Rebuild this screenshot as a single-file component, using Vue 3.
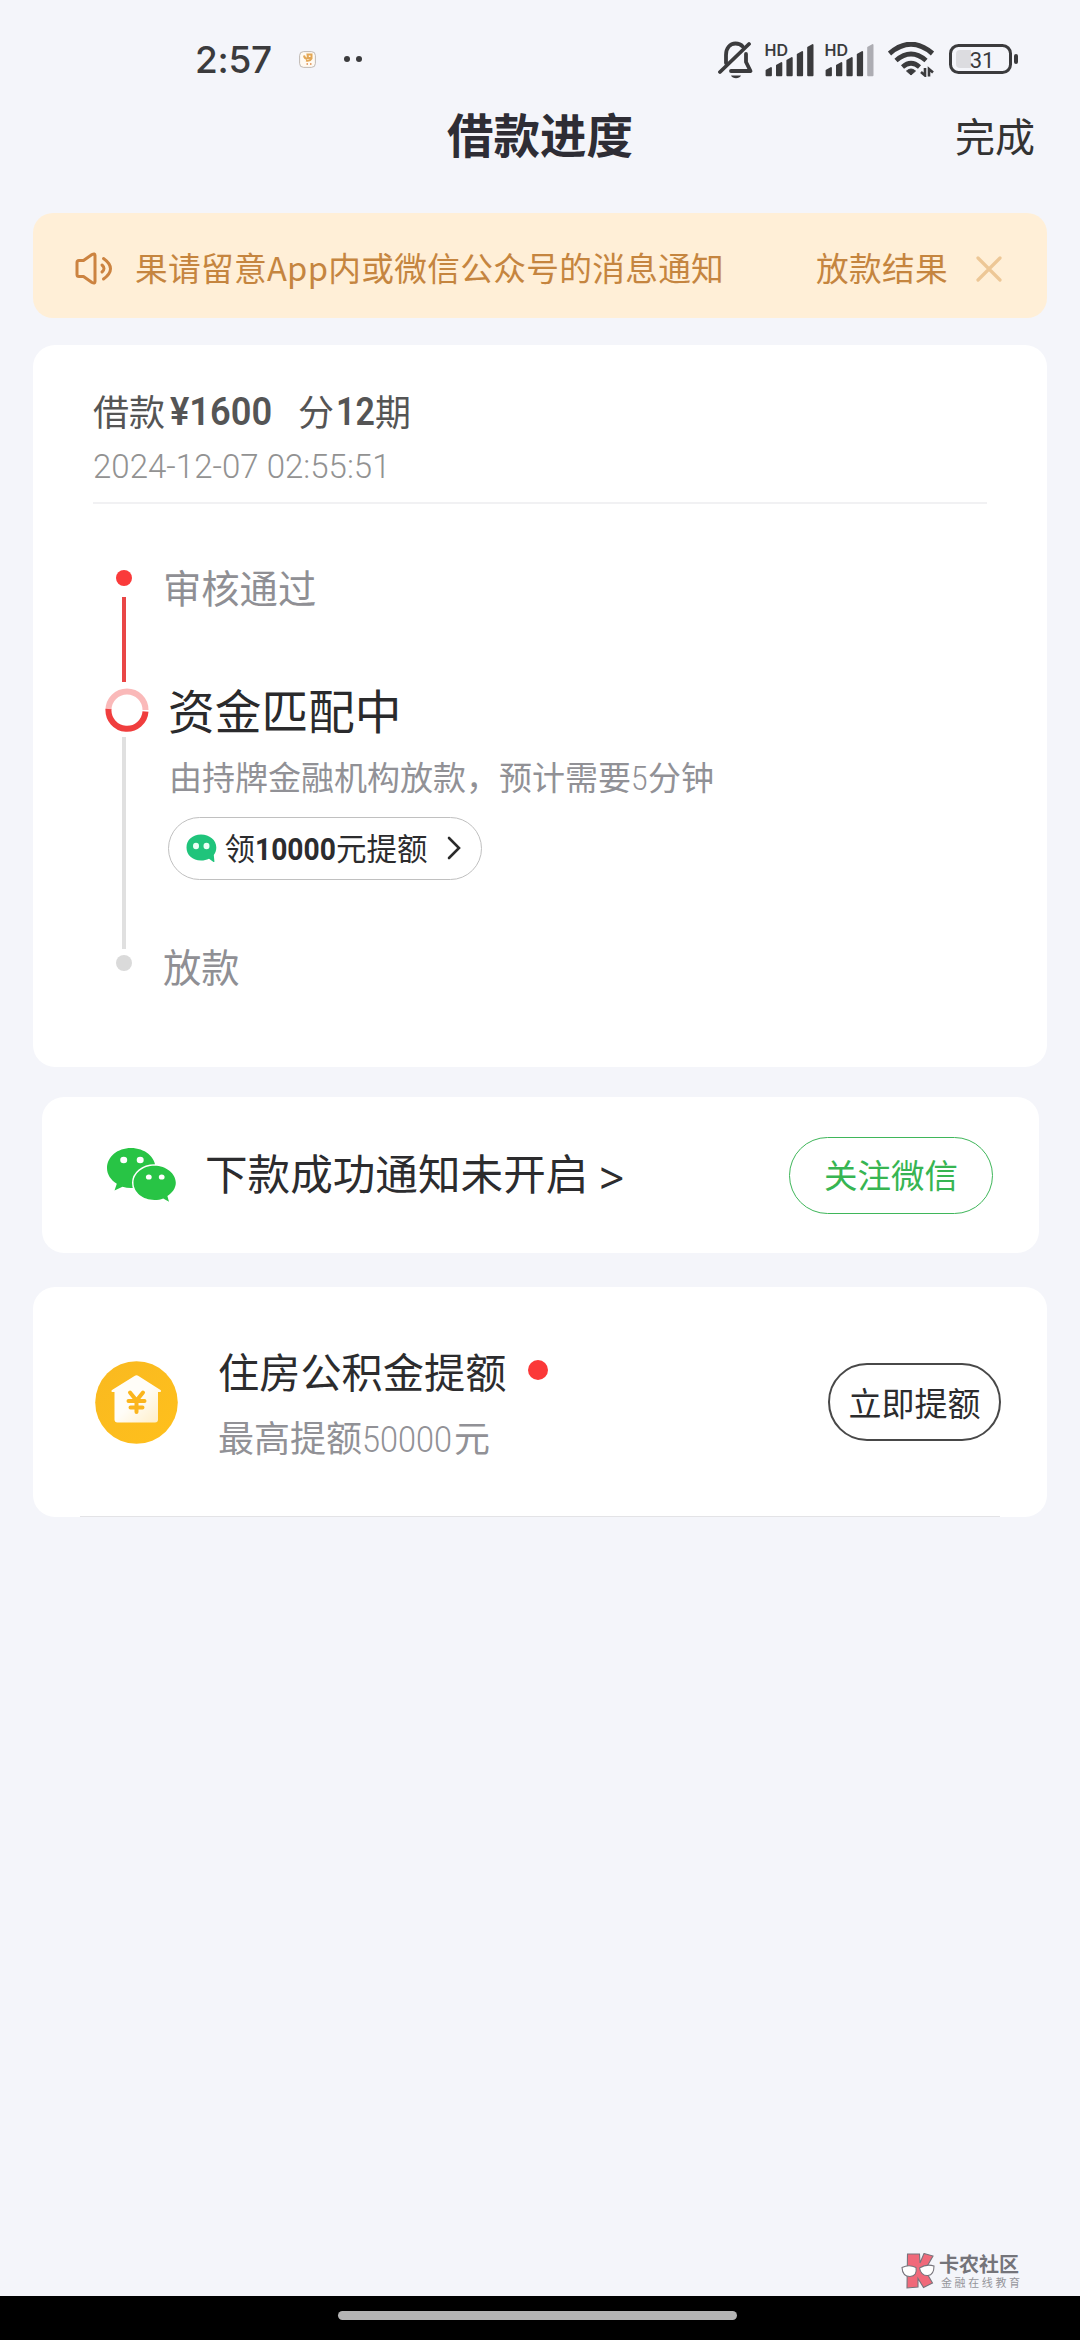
<script setup>
const bars = [
  { x: 0, h: 8 },
  { x: 10.4, h: 13 },
  { x: 20.8, h: 18 },
  { x: 31.2, h: 24 },
  { x: 41.6, h: 31 },
]
const signals = [{ level: 5 }, { level: 4 }]
</script>

<template>
  <div class="screen">
    <header class="status">
      <span class="clock">2:57</span>
      <svg class="app-dot" width="17" height="17" viewBox="0 0 17 17">
        <rect x=".6" y=".6" width="15.8" height="15.8" rx="4" fill="#fffaf2" stroke="#b9b1ac" stroke-width=".9" />
        <path d="M5 4.500q.5 3 3.200 3.200M8.500 3.500h4v3.500h-3.500zM7 9.500q4 1 5.500-2" fill="none" stroke="#e3a756" stroke-width="2" />
        <path d="M7.500 13h1.500M11 13h1.500" stroke="#dd8a4a" stroke-width="1.600" />
      </svg>
      <span class="more"><i></i><i></i></span>
      <span class="grow"></span>
      <svg class="bell" width="36" height="38" viewBox="0 0 36 38" fill="none" stroke="#3b3b3d" stroke-width="3.800" stroke-linecap="round" stroke-linejoin="round">
        <path d="M8 22V14C8 7 12 2.500 17.500 2.500c3 0 5.500 1 7.200 3" />
        <path d="M28 13v8l4.500 9H13" />
        <path d="M2 31 31 3" />
        <path d="M13 34.500h10c-1.500 3.500-8.500 3.500-10 0z" fill="#3b3b3d" stroke="none" />
      </svg>
      <svg v-for="(s, n) in signals" :key="n" class="signal" width="51" height="34" viewBox="0 0 51 34">
        <text x="-0.500" y="13.500" class="hd">HD</text>
        <path
          v-for="(b, i) in bars"
          :key="i"
          :d="`M${b.x + 1.5} ${34 - b.h + 2.500}l4.500 -2.500V33.300h-4.500z`"
          :fill="i < s.level ? '#3b3b3d' : '#adadb3'"
          :stroke="i < s.level ? '#3b3b3d' : '#adadb3'"
          stroke-width="1.800"
          stroke-linejoin="round"
        />
      </svg>
      <svg class="wifi" width="47" height="35" viewBox="0 0 47 35" fill="none" stroke="#3b3b3d">
        <path d="M1.500 11.500Q23 -7 44.500 11.500" stroke-width="5" />
        <path d="M8 18.500Q23 5.500 38 18.500" stroke-width="4.800" />
        <path d="M14.500 25Q23 17.500 31.500 25" stroke-width="4.600" />
        <path d="M18.500 29q4.500-4 9 0l-4.500 4z" fill="#3b3b3d" stroke-width="1" />
        <path d="M37 26v7.500l-4-3.500M41 34.500V27l4 3.500" stroke-width="2.600" />
      </svg>
      <svg class="battery" width="70" height="30" viewBox="0 0 70 30">
        <rect x="1.500" y="1.500" width="60" height="27" rx="8" fill="none" stroke="#3b3b3d" stroke-width="3" />
        <path d="M11 6h11v18H11a4 4 0 0 1-4-4V10a4 4 0 0 1 4-4z" fill="#dcdce0" />
        <rect x="65" y="10" width="4" height="10" rx="2" fill="#3b3b3d" />
        <text x="33" y="23.500" text-anchor="middle" class="pct">31</text>
      </svg>
    </header>

    <nav class="nav">
      <span></span>
      <h1>借款进度</h1>
      <a class="done">完成</a>
    </nav>

    <section class="notice">
      <svg class="speaker" width="38" height="33" viewBox="0 0 38 33" fill="none" stroke="#cc8340" stroke-width="3" stroke-linejoin="round" stroke-linecap="round">
        <path d="M2 10.500q0-2 2-2h4.500L17 2.500q3-1.500 3 1v26q0 2.500-3 1l-8.500-6H4q-2 0-2-2z" />
        <path d="M27 13q4 3.500 0 7M28.500 6.500q14 10 0 20.500" />
      </svg>
      <div class="marquee">
        <span>果请留意App内或微信公众号的消息通知</span>
        <span>放款结果请</span>
      </div>
      <svg class="close" width="26" height="26" viewBox="0 0 26 26" stroke="#edc796" stroke-width="3.200" stroke-linecap="round">
        <path d="M2 2l22 22M24 2 2 24" />
      </svg>
    </section>

    <section class="card loan">
      <div class="loan-head">
        <p class="loan-title">
          <span>借款</span><b class="din amount">¥1600</b><span>分</span><b class="din term">12</b><span>期</span>
        </p>
        <p class="loan-date"><span class="din">2024-12-07 02:55:51</span></p>
      </div>
      <div class="timeline">
        <div class="rail">
          <i class="dot red"></i>
          <i class="line past"></i>
          <svg class="ring" width="44" height="44" viewBox="0 0 44 44" fill="none" stroke-width="6">
            <path d="M3.500 22a18.500 18.500 0 0 1 37 0" stroke="#fab9b9" />
            <path d="M3.500 21a18.500 18.500 0 0 0 37 2.500" stroke="#f03e3e" />
          </svg>
          <i class="line next"></i>
          <i class="dot gray"></i>
        </div>
        <div class="steps">
          <p class="step">审核通过</p>
          <p class="current">资金匹配中</p>
          <p class="desc">由持牌金融机构放款，预计需要<span class="din five">5</span>分钟</p>
          <a class="bonus">
            <svg width="31" height="29" viewBox="0 0 31 29">
              <path d="M15 .5C6.500 .5 .5 6 .5 13.500S6.500 26.500 15 26.500c3 0 5.500-.6 8-1.800l4.500 3.300q1 .3.900-.8l-.6-6.200c1.700-2.200 2.500-4.700 2.500-7.500C30.300 6 23.500.5 15 .5z" fill="#1fc47b" />
              <ellipse cx="10" cy="12" rx="3" ry="3.200" fill="#e9fff4" />
              <ellipse cx="20.500" cy="12" rx="3" ry="3.200" fill="#e9fff4" />
            </svg>
            <span class="bonus-text">领<b class="din ten">10000</b>元提额</span>
            <svg class="chev" width="14" height="24" viewBox="0 0 14 24" fill="none" stroke="#2b2b2b" stroke-width="2.600" stroke-linecap="round">
              <path d="M2 2l10 10L2 22" />
            </svg>
          </a>
          <p class="step last">放款</p>
        </div>
      </div>
    </section>

    <section class="card wechat">
      <svg width="69" height="54" viewBox="0 0 69 54">
        <path d="M24 0C10.500 0 0 8.800 0 20c0 6.500 3.800 12 9.800 15.800L7.500 42.500l8-3.700c2.800.8 5.500 1.200 8.500 1.200 13.500 0 24.500-8.800 24.500-20S37.500 0 24 0z" fill="#28c445" />
        <path d="M47.500 17.700C35.800 17.700 26.500 25.300 26.500 34.800s9.300 17.200 21 17.200c3.200 0 6-.5 8.700-1.500l5.800 3.300-1.600-5.800c5-3.200 8.400-7.900 8.400-13.200 0-9.500-9.800-17.100-21.300-17.100z" fill="#28c445" stroke="#fff" stroke-width="3" paint-order="stroke" />
        <ellipse cx="16.700" cy="12" rx="3.500" ry="3.200" fill="#fff" />
        <ellipse cx="33.200" cy="12" rx="3.500" ry="3.200" fill="#fff" />
        <ellipse cx="41.800" cy="29" rx="2.900" ry="2.600" fill="#fff" />
        <ellipse cx="54.700" cy="29" rx="2.900" ry="2.600" fill="#fff" />
      </svg>
      <span class="wechat-text">下款成功通知未开启</span>
      <span class="gt">&gt;</span>
      <a class="btn green">关注微信</a>
    </section>

    <section class="card fund">
      <svg width="83" height="83" viewBox="0 0 83 83">
        <defs>
          <linearGradient id="disc" x1="0" y1="0" x2="1" y2="1">
            <stop offset="0" stop-color="#f9b920" />
            <stop offset="1" stop-color="#ffc01c" />
          </linearGradient>
          <linearGradient id="house" x1="0" y1="0" x2="1" y2="1">
            <stop offset=".5" stop-color="#fffdf8" />
            <stop offset="1" stop-color="#ffedc4" />
          </linearGradient>
        </defs>
        <circle cx="41.500" cy="41.500" r="41.300" fill="url(#disc)" />
        <path d="M39.500 15q2-1.500 4 0L65.500 29q1.500 1.500-.5 2h-2v27.500q0 3-3 3H22.500q-3 0-3-3V31h-2q-2-.5-.5-2z" fill="url(#house)" />
        <path d="M35 31.500l6.500 8 6.500-8M41.500 40v11M33.500 40h16M35.500 46.500h12" fill="none" stroke="#fbb51d" stroke-width="4" stroke-linecap="round" />
      </svg>
      <div class="fund-main">
        <p class="fund-title">住房公积金提额<i></i></p>
        <p class="fund-sub">最高提额<span class="din fifty">50000</span>元</p>
      </div>
      <a class="btn dark">立即提额</a>
    </section>

    <div class="grow"></div>

    <footer class="mark">
      <svg width="34" height="36" viewBox="0 0 34 36" stroke="#77747c" stroke-width="1.100">
        <path d="M6.500 1h12l.5 9 4-9.500 9 2.500-8 14 7.500 13-9 4.500-5.500-9v8.500l-11 1z" fill="#f0697a" />
        <path d="M1 14.500q7-3.500 14 0 1.500 8.500-6 9-7.500 0-8-9zM18.500 15q7-4.500 14.500-2 0 9-6 9.500-7 .5-8.500-7.500z" fill="#fff" />
      </svg>
      <div>
        <p class="mark-name">卡农社区</p>
        <p class="mark-sub">金融在线教育</p>
      </div>
    </footer>
    <div class="gesture"><i></i></div>
  </div>
</template>

<style>
body {
  margin: 0;
}
</style>

<style scoped>
.screen {
  width: 1080px;
  height: 2340px;
  box-sizing: border-box;
  display: flex;
  flex-direction: column;
  overflow: hidden;
  background: #f4f5fa;
  color: #2c2c2e;
  font-family: "Noto Sans CJK SC", sans-serif;
}
p,
h1 {
  margin: 0;
  white-space: nowrap;
}
i,
.din {
  display: inline-block;
}
.din {
  font-family: Roboto, sans-serif;
  line-height: 1;
  transform-origin: left center;
}
.grow {
  flex: 1;
}
.status {
  height: 100px;
  flex: none;
  display: flex;
  align-items: flex-start;
  padding: 0 61px 0 195px;
}
.clock {
  width: 104px;
  margin-top: 38px;
  font: 500 37px/44px Inter, sans-serif;
  letter-spacing: -0.300px;
  color: #3b3b3d;
}
.app-dot {
  margin-top: 51px;
}
.more {
  display: flex;
  gap: 6px;
  margin: 56px 0 0 28px;
}
.more i {
  width: 6px;
  height: 6px;
  border-radius: 50%;
  background: #3b3b3d;
}
.bell {
  margin: 41px 11px 0 0;
}
.signal {
  margin: 42px 9px 0 0;
  overflow: visible;
}
.hd {
  font: 600 16px Inter, sans-serif;
  fill: #3b3b3d;
}
.wifi {
  margin: 42px 14px 0 3px;
}
.battery {
  margin-top: 44px;
}
.pct {
  font: 400 22px Roboto, sans-serif;
  fill: #3b3b3d;
}
.nav {
  height: 113px;
  flex: none;
  display: grid;
  grid-template-columns: 1fr auto 1fr;
  align-items: start;
  padding: 0 45px;
}
h1 {
  font-size: 46.500px;
  line-height: 60px;
  font-weight: 700;
  margin-top: 3px;
  color: #2e2d35;
}
.done {
  justify-self: end;
  font-size: 40px;
  line-height: 60px;
  margin-top: 5px;
  color: #333;
}
.notice {
  flex: none;
  height: 105px;
  margin: 0 33px;
  padding: 0 45px 0 42px;
  border-radius: 20px;
  background: #ffefd7;
  display: flex;
  align-items: center;
}
.speaker {
  margin-top: 5px;
}
.marquee {
  flex: 1;
  margin: 2px 28px 0 22px;
  display: flex;
  gap: 92px;
  overflow: hidden;
  white-space: nowrap;
  font-size: 32.700px;
  line-height: 48px;
  letter-spacing: 0.300px;
  color: #c5853f;
}
.close {
  margin-top: 7px;
}
.card {
  flex: none;
  background: #fff;
  border-radius: 22px;
}
.loan {
  margin: 27px 33px 0;
  height: 722px;
  padding: 0 60px;
  box-sizing: border-box;
}
.loan-head {
  height: 159px;
  padding-top: 43px;
  box-sizing: border-box;
  border-bottom: 2px solid #f1f1f3;
}
.loan-title {
  display: flex;
  align-items: center;
  height: 44px;
  font-size: 36px;
  line-height: 44px;
  color: #555;
}
.loan-title b {
  font-size: 39px;
  font-weight: 600;
  transform: translateY(2px) scaleX(0.93);
}
.amount {
  width: 128px;
  margin-left: 5px;
}
.loan-title .term {
  width: 39px;
  margin-left: 2px;
  transform: translateY(2px) scaleX(0.87);
}
.loan-date {
  margin-top: 14px;
  height: 40px;
  display: flex;
  align-items: center;
  color: #929292;
}
.loan-date .din {
  font-size: 34px;
  font-weight: 300;
  transform: scaleX(0.972);
}
.timeline {
  display: flex;
}
.rail {
  width: 76px;
  padding: 65.500px 0 0 22.500px;
  box-sizing: border-box;
}
.rail i,
.ring {
  display: block;
}
.dot {
  width: 16.500px;
  height: 16.500px;
  border-radius: 50%;
}
.red {
  background: #fa3a3a;
}
.gray {
  background: #dadada;
}
.line {
  width: 4px;
  margin-left: 6.500px;
}
.past {
  height: 85px;
  margin-top: 11px;
  background: #e94646;
}
.ring {
  margin: 5.500px 0 5.500px -11px;
}
.next {
  height: 212px;
  margin-bottom: 5.500px;
  background: #e0e0e0;
}
.steps {
  padding-top: 58px;
}
.step {
  font-size: 38.300px;
  line-height: 50px;
  margin-left: -6px;
  color: #8f8f94;
}
.current {
  margin-top: 66.500px;
  margin-left: -1px;
  font-size: 46.700px;
  line-height: 60px;
  color: #2a2a2c;
}
.desc {
  margin-top: 17px;
  font-size: 33px;
  line-height: 40px;
  color: #919196;
}
.five {
  width: 17px;
  font-size: 33px;
  font-weight: 300;
  transform: scaleX(0.9);
}
.bonus {
  display: flex;
  align-items: center;
  width: 314px;
  height: 63px;
  box-sizing: border-box;
  margin: 21px 0 61px -1.500px;
  padding-left: 17px;
  border: 1.500px solid #c0c0c0;
  border-radius: 32px;
}
.bonus-text {
  width: 222px;
  margin: -3px 0 0 8px;
  white-space: nowrap;
  font-size: 30.500px;
  line-height: 44px;
}
.ten {
  width: 81px;
  font-size: 31px;
  font-weight: 700;
  transform: scaleX(0.91);
}
.wechat {
  margin: 30px 41px 0 42px;
  height: 156px;
  padding: 0 46px 0 65px;
  display: flex;
  align-items: center;
}
.wechat svg {
  margin-top: -1px;
  overflow: visible;
}
.wechat-text {
  margin: -6px 0 0 29px;
  font-size: 42.600px;
  line-height: 60px;
}
.gt {
  flex: 1;
  margin: 3px 0 0 11px;
  font: 400 44px/44px "Noto Sans", sans-serif;
}
.btn {
  box-sizing: border-box;
  text-align: center;
  border-radius: 40px;
}
.green {
  width: 204px;
  height: 77px;
  font-size: 33.500px;
  line-height: 71px;
  color: #37b552;
  border: 1.500px solid #3fb65a;
}
.fund {
  position: relative;
  margin: 34px 33px 0;
  height: 230px;
  padding: 0 46px 0 62px;
  display: flex;
  align-items: center;
}
.fund::after {
  content: "";
  position: absolute;
  left: 47px;
  right: 47px;
  bottom: 0;
  height: 1px;
  background: #e3e3e6;
}
.fund-main {
  flex: 1;
  margin: -4px 0 0 40px;
}
.fund-title {
  display: flex;
  align-items: center;
  font-size: 41.200px;
  line-height: 60px;
}
.fund-title i {
  width: 20px;
  height: 20px;
  margin-left: 22px;
  border-radius: 50%;
  background: #fb3838;
}
.fund-sub {
  margin-top: 11px;
  font-size: 36px;
  line-height: 50px;
  color: #919196;
}
.fifty {
  width: 92px;
  font-size: 36px;
  font-weight: 300;
  transform: scaleX(0.9);
}
.dark {
  width: 173px;
  height: 78px;
  font-size: 33px;
  line-height: 75px;
  border: 2px solid #484848;
}
.mark {
  display: flex;
  align-items: center;
  gap: 4px;
  height: 36px;
  margin: 0 0 7px 901px;
}
.mark-name {
  font-size: 20px;
  line-height: 20px;
  font-weight: 700;
  color: #74747a;
}
.mark-sub {
  margin-top: 2px;
  padding-left: 2px;
  font-size: 11px;
  line-height: 12px;
  letter-spacing: 2.600px;
  color: #96969c;
}
.gesture {
  flex: none;
  height: 44px;
  background: #000;
}
.gesture i {
  display: block;
  width: 399px;
  height: 9px;
  margin: 15px auto 0;
  border-radius: 5px;
  background: #b4b4b4;
  transform: translateX(-3px);
}
</style>
